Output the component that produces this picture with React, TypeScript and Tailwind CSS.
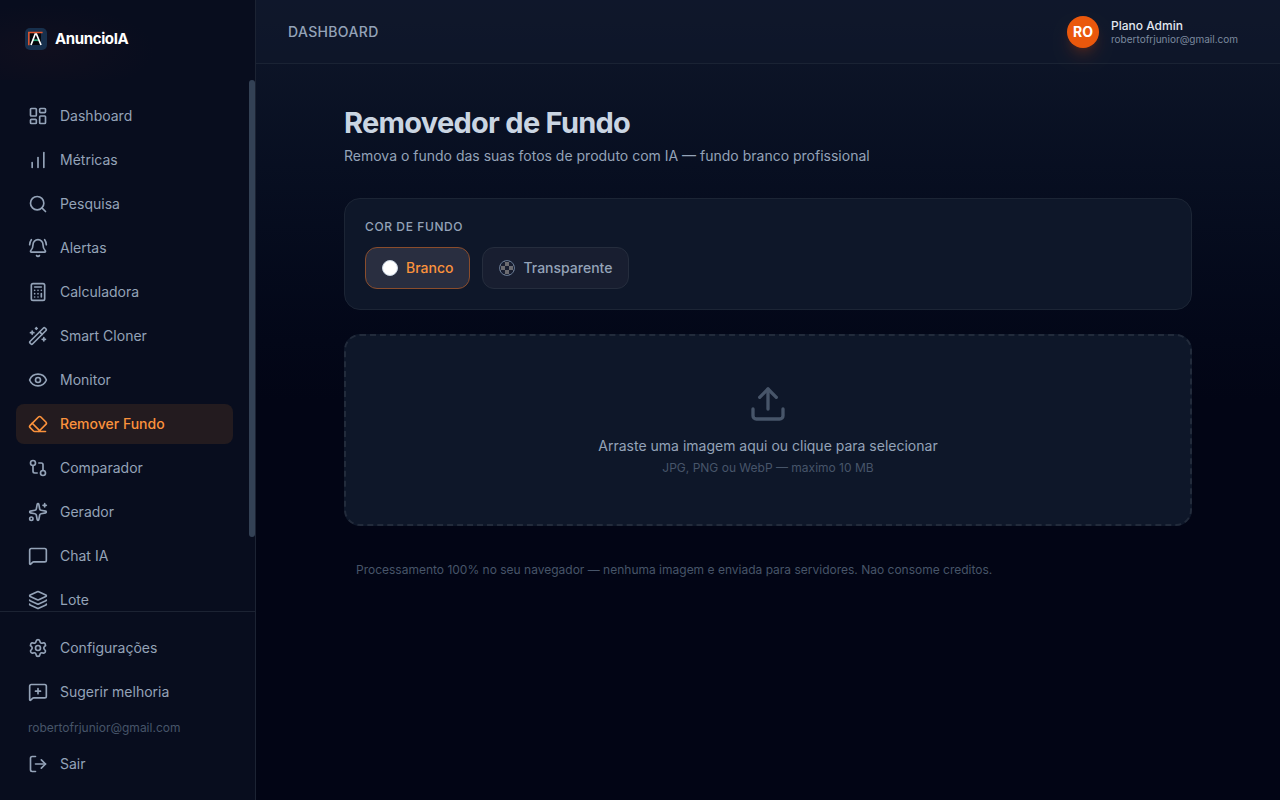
import { useState } from "react";
import type { LucideIcon } from "lucide-react";
import {
  BellRing, Calculator, ChartNoAxesColumnIncreasing, Eraser, Eye, GitCompare, Layers,
  LayoutDashboard, LogOut, MessageSquare, MessageSquarePlus, Search, Settings, Sparkles,
  Upload, WandSparkles,
} from "lucide-react";

const EMAIL = "robertofrjunior@gmail.com";

const NAV: { label: string; icon: LucideIcon; active?: boolean }[] = [
  { label: "Dashboard", icon: LayoutDashboard },
  { label: "Métricas", icon: ChartNoAxesColumnIncreasing },
  { label: "Pesquisa", icon: Search },
  { label: "Alertas", icon: BellRing },
  { label: "Calculadora", icon: Calculator },
  { label: "Smart Cloner", icon: WandSparkles },
  { label: "Monitor", icon: Eye },
  { label: "Remover Fundo", icon: Eraser, active: true },
  { label: "Comparador", icon: GitCompare },
  { label: "Gerador", icon: Sparkles },
  { label: "Chat IA", icon: MessageSquare },
  { label: "Lote", icon: Layers },
];

function Logo() {
  return (
    <svg viewBox="0 0 22 22" className="size-[22px] shrink-0" aria-hidden="true">
      <rect width="22" height="22" rx="5" fill="#17304d" />
      <path d="M5 5h11v12H5z" fill="#05070c" />
      <path d="M3.8 17.2V4.5H17.6" fill="none" stroke="#e2562f" strokeWidth="1.5" />
      <path d="M8 12.2h6" stroke="#2fa97c" strokeWidth="1.8" />
      <path d="M6 17 10.2 6h1.2L16 17" fill="none" stroke="#fff" strokeWidth="1.7" />
    </svg>
  );
}

function NavItem({ label, icon: Icon, active }: { label: string; icon: LucideIcon; active?: boolean }) {
  return (
    <a
      href="#"
      aria-current={active ? "page" : undefined}
      className={`flex h-10 shrink-0 items-center gap-3 rounded-lg px-3 text-sm transition-colors ${active ? "bg-[#231b1f] font-medium text-[#fb923c]" : "text-[#94a3b8] hover:bg-white/5 hover:text-slate-200"}`}
    >
      <Icon className="size-5" />
      {label}
    </a>
  );
}

function Sidebar() {
  return (
    <aside className="flex w-64 shrink-0 flex-col border-r border-[#1c2333] bg-[#080d1e]">
      <div className="flex h-20 shrink-0 items-center bg-[radial-gradient(ellipse_110px_46px_at_44px_50px,#100f1e,transparent)] px-[25px] pb-0.5">
        <a href="#" className="flex items-center gap-2">
          <Logo />
          <span className="text-[15px] font-bold tracking-tight text-white">AnuncioIA</span>
        </a>
      </div>
      <div className="flex min-h-0 flex-1">
        <nav className="flex min-w-0 flex-1 flex-col gap-1 overflow-y-auto px-4 py-4 [scrollbar-width:none]">
          {NAV.map(item => <NavItem key={item.label} {...item} />)}
        </nav>
        <div className="w-1.5 shrink-0" aria-hidden="true">
          <div className="h-[86%] rounded-full bg-[#334155]" />
        </div>
      </div>
      <div className="flex flex-col gap-1 border-t border-[#1c2333] p-4">
        <NavItem label="Configurações" icon={Settings} />
        <NavItem label="Sugerir melhoria" icon={MessageSquarePlus} />
        <p className="truncate px-3 py-1 text-xs text-[#475569]">{EMAIL}</p>
        <button type="button" className="flex h-10 w-full items-center gap-3 rounded-lg px-3 text-sm text-[#94a3b8] hover:text-slate-200">
          <LogOut className="size-5" />
          Sair
        </button>
      </div>
    </aside>
  );
}

function Header() {
  return (
    <header className="flex h-16 shrink-0 items-center justify-between border-b border-[#1a2334] bg-slate-900/50 px-8">
      <span className="text-sm font-medium tracking-wide text-[#94a3b8] uppercase">Dashboard</span>
      <button type="button" className="flex items-center gap-3 px-2 text-left">
        <span className="flex size-8 items-center justify-center rounded-full bg-[#ea580c] text-sm font-bold text-white shadow-lg shadow-orange-600/20">RO</span>
        <span className="flex min-w-[129px] flex-col">
          <span className="text-xs leading-[14px] font-medium text-slate-200">Plano Admin</span>
          <span className="text-[10px] leading-3 text-[#7c8a9f]">{EMAIL}</span>
        </span>
      </button>
    </header>
  );
}

export default function App() {
  const [bg, setBg] = useState<"white" | "transparent">("white");

  const option = (on: boolean) =>
    `flex items-center gap-2 rounded-xl border px-4 py-2.5 text-sm font-medium transition-colors ${on ? "border-[#8a4d2c] bg-[#292e40] text-[#fb923c]" : "border-[#252d3d] bg-[#181e30] text-[#94a3b8]"}`;

  return (
    <div className="flex h-screen bg-[#020617] font-[Inter,sans-serif] text-slate-300 antialiased">
      <Sidebar />
      <div className="flex min-w-0 flex-1 flex-col bg-linear-to-b from-[#0f172a] to-[#020515] to-50%">
        <Header />
        <main className="min-h-0 flex-1 overflow-y-auto">
          <div className="mx-auto max-w-4xl px-6 pt-10 pb-8">
            <h1 className="text-[29px] leading-[38px] font-bold tracking-tight text-slate-300">Removedor de Fundo</h1>
            <p className="mt-1 text-sm text-[#94a3b8]">Remova o fundo das suas fotos de produto com IA — fundo branco profissional</p>

            <section className="mt-8 rounded-2xl border border-[#1c2535] bg-[#0e1729] p-5">
              <h2 className="mb-3 text-xs font-medium tracking-wider text-[#94a3b8] uppercase">Cor de fundo</h2>
              <div className="flex gap-3">
                <button type="button" aria-pressed={bg === "white"} onClick={() => setBg("white")} className={option(bg === "white")}>
                  <span className="size-4 rounded-full border border-slate-300 bg-white" />
                  Branco
                </button>
                <button type="button" aria-pressed={bg === "transparent"} onClick={() => setBg("transparent")} className={option(bg === "transparent")}>
                  <span className="size-4 rounded-full border border-slate-500 bg-[repeating-conic-gradient(#6b6b70_0%_25%,transparent_0%_50%)] bg-size-[8px_8px] bg-position-[5px_5px]" />
                  Transparente
                </button>
              </div>
            </section>

            <label className="mt-6 flex cursor-pointer flex-col items-center rounded-2xl border-2 border-dashed border-[#222b3b] bg-[#0e1729] p-12">
              <input type="file" accept="image/jpeg,image/png,image/webp" className="sr-only" />
              <Upload className="mb-3 size-10 text-[#475569]" />
              <span className="text-sm text-[#94a3b8]">Arraste uma imagem aqui ou clique para selecionar</span>
              <span className="mt-1 text-xs text-[#475569]">JPG, PNG ou WebP — maximo 10 MB</span>
            </label>

            <p className="mt-6 p-3 text-xs text-[#475569]">
              Processamento 100% no seu navegador — nenhuma imagem e enviada para servidores. Nao consome creditos.
            </p>
          </div>
        </main>
      </div>
    </div>
  );
}
